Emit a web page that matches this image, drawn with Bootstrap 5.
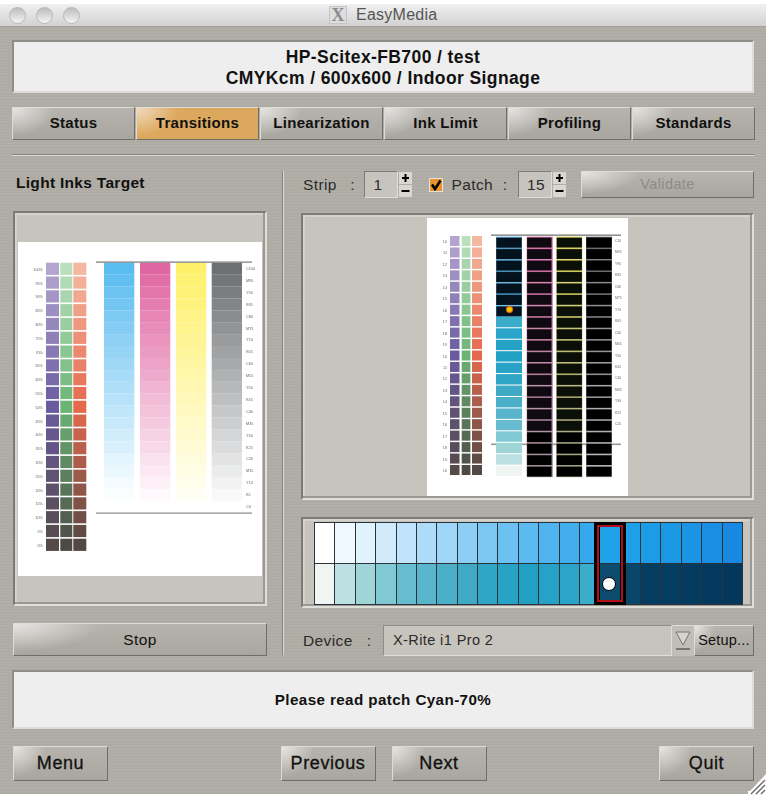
<!DOCTYPE html>
<html lang="en">
<head>
    <meta charset="UTF-8">
    <title>EasyMedia</title>
    <link href="https://cdn.jsdelivr.net/npm/bootstrap@5.3.2/dist/css/bootstrap.min.css" rel="stylesheet">
    <style>
        html, body { margin: 0; background: #fff; }
        body { font-family: "Liberation Sans", Arial, sans-serif; color: #111; }
        .app-window { width: 766px; height: 796px; padding: 4px 0 2px; position: relative; overflow: hidden; }
        .title-bar { height: 23px; background: linear-gradient(#f0f0f0, #d2d2d2); border-bottom: 1px solid #a5a39d; padding-left: 9px; }
        .light { width: 17px; height: 17px; border-radius: 50%; border: 1px solid #b8b8b8; background: linear-gradient(#bdbdbd, #f4f4f4); margin-right: 10px; }
        .title-wrap { position: absolute; left: 329px; top: 6px; }
        .x-logo { width: 18px; height: 18px; background: #dedede; border: 1px solid #c4c4c4; font: 700 18px/17px "Liberation Serif", serif; color: #8c8c8c; text-align: center; }
        .title-text { margin-left: 9px; font-size: 16px; letter-spacing: .25px; color: #555; line-height: 18px; }
        .metal { height: 767px; padding: 13px 12px 0; background: repeating-linear-gradient(0deg, #b0ada6 0 1px, #adaaa3 1px 2px, #b2afa8 2px 3px); }
        .info-box { background: #eeeeee; border: 2px solid #8f8d88; border-right-color: #dedcd6; border-bottom-color: #dedcd6; font-weight: 700; text-align: center; letter-spacing: .4px; }
        .head-box { height: 53px; width: 742px; font-size: 17.5px; line-height: 21px; padding-top: 5px; }
        .tab-row { margin-top: 14px; gap: 1px; width: 743px; }
        .mac-btn { border-radius: 0; padding: 0; color: #111; font-size: 16px; font-family: inherit; letter-spacing: .4px;
            border: 1px solid #6f6d68; border-top-color: #dddbd5; border-left-color: #dddbd5;
            background: radial-gradient(ellipse 34% 90% at 0 0, rgba(255,255,255,.65), rgba(255,255,255,0)), linear-gradient(#b7b4ad, #a9a69f); }
        .mac-btn:disabled { color: #8d8b86; opacity: 1; border-color: #dddbd5 #6f6d68 #6f6d68 #dddbd5; }
        .tab-btn { flex: 1 1 0; height: 33px; font-weight: 700; font-size: 15px; letter-spacing: .3px; }
        .tab-on { background: radial-gradient(ellipse 34% 90% at 0 0, rgba(255,255,255,.6), rgba(255,255,255,0)), #dca85e; }
        .rule { height: 2px; width: 742px; margin: 14px 0 15px; background: #85837e; border-bottom: 1px solid #dddbd5; }
        .side-left { width: 254px; margin-left: 1px; }
        .side-title { height: 40px; margin-left: 3px; padding-top: 3px; font-weight: 700; font-size: 15.5px; line-height: 18px; letter-spacing: .3px; }
        .divider { width: 2px; height: 484px; margin: 0 17px 0 15px; background: #85837e; border-right: 1px solid #dddbd5; }
        .side-right { width: 453px; }
        .sunken { border: 2px solid #7d7b76; border-right-color: #e0ded8; border-bottom-color: #e0ded8; padding: 3px; background: #c6c4bd; box-shadow: inset -2px -2px 0 #9a9892, inset 2px 2px 0 #d4d2cc; }
        .target-frame { height: 395px; }
        .target-frame svg { display: block; margin-top: 26px; filter: blur(.35px); }
        .stop-btn { height: 33px; margin-top: 17px; width: 254px; font-size: 15.5px; }
        .ctrl-row { height: 27px; margin-bottom: 15px; font-size: 15.5px; letter-spacing: .4px; color: #2b2b2b; }
        .strip-label { width: 47px; margin-left: 2px; }
        .patch-label { width: 45px; margin-left: 8px; }
        .ctrl-colon { width: 8px; text-align: center; }
        .colon-strip { margin-right: 8px; }
        .colon-patch { margin-left: 6px; margin-right: 9px; }
        .num-box { width: 34px; height: 27px; background: #c6c4bd; border: 1px solid #e0ded8; border-top-color: #7d7b76; border-left-color: #7d7b76; padding-left: 8px; line-height: 25px; }
        .spin { width: 13px; margin-left: 1px; }
        .spin svg { display: block; margin-bottom: 1px; }
        .check-box { width: 14px; height: 14px; margin-left: 17px; background: #e8932e; border: 1px solid #e6e4de; display: block; }
        .check-box svg { display: block; }
        .validate-btn { width: 173px; height: 27px; margin-left: 15px; font-size: 14.5px; flex-shrink: 0; }
        .page-frame { height: 287px; width: 453px; padding-top: 3px; }
        .page-frame svg { display: block; margin: 0 auto; filter: blur(.3px); }
        .strip-frame { height: 91px; width: 453px; margin-top: 17px; padding: 3px 9px 2px 11px; }
        .strip-wrap { position: relative; width: 429px; }
        .patch-grid { display: grid; grid-template-columns: repeat(21, 1fr); grid-auto-rows: 40px; background: #2a3338; gap: 1px; padding: 1px; }
        .strip-mark { position: absolute; left: 280px; top: 0; width: 32px; height: 83px; border: solid #000; border-width: 3px 6px; pointer-events: none; }
        .strip-mark::before { content: ""; position: absolute; left: -3px; top: 0; right: -3px; bottom: 0; border: 2px solid #b0101c; }
        .strip-dot { position: absolute; left: 2px; top: 52px; width: 14px; height: 14px; border-radius: 50%; background: #fff; border: 1px solid #000; }
        .device-row { margin-top: 17px; height: 31px; font-size: 15.5px; letter-spacing: .4px; color: #2b2b2b; }
        .device-label { width: 63px; margin-left: 2px; }
        .combo-field { width: 289px; height: 31px; margin-left: 10px; padding-left: 9px; line-height: 29px; font-size: 14.5px; background: #c6c4bd; border: 1px solid #e0ded8; border-top-color: #8f8d88; border-left-color: #8f8d88; flex-shrink: 0; }
        .combo-arrow { width: 22px; height: 31px; background: #c0beb7; border-top: 1px solid #e0ded8; flex-shrink: 0; }
        .setup-btn { width: 60px; height: 31px; font-size: 14.5px; letter-spacing: .2px; flex-shrink: 0; }
        .msg-box { height: 59px; width: 742px; margin-top: 14px; font-size: 15.2px; line-height: 55px; }
        .foot-row { margin: 17px 0 0 1px; width: 741px; }
        .foot-btn { width: 95px; height: 35px; font-size: 18px; letter-spacing: .6px; -webkit-text-stroke: .3px #111; }
        .foot-gap { width: 16px; }
        .resize-grip { position: absolute; right: 0; bottom: 0; width: 18px; height: 22px; }
        .tiny-tag { filter: blur(.45px); }
    </style>
</head>
<body>
<div class="app-window">
    <div class="title-bar d-flex align-items-center">
        <span class="light"></span><span class="light"></span><span class="light"></span>
    </div>
    <div class="title-wrap d-flex">
        <div class="x-logo">X</div>
        <div class="title-text">EasyMedia</div>
    </div>

    <div class="metal">
        <div class="info-box head-box">HP-Scitex-FB700 / test<br>CMYKcm / 600x600 / Indoor Signage</div>

        <div class="d-flex tab-row">
            <button class="btn mac-btn tab-btn">Status</button>
            <button class="btn mac-btn tab-btn tab-on">Transitions</button>
            <button class="btn mac-btn tab-btn">Linearization</button>
            <button class="btn mac-btn tab-btn">Ink Limit</button>
            <button class="btn mac-btn tab-btn">Profiling</button>
            <button class="btn mac-btn tab-btn">Standards</button>
        </div>
        <div class="rule"></div>

        <div class="d-flex">
            <div class="side-left">
                <div class="side-title">Light Inks Target</div>
                <div class="sunken target-frame">
                    <svg id="light-chart" width="244" height="334" viewBox="18 242 244 334"></svg>
                </div>
                <button class="btn mac-btn stop-btn d-block">Stop</button>
            </div>
            <div class="divider"></div>
            <div class="side-right">
                <div class="d-flex align-items-center ctrl-row">
                    <span class="strip-label">Strip</span>
                    <span class="ctrl-colon colon-strip">:</span>
                    <div class="num-box flex-shrink-0">1</div>
                    <div class="spin flex-shrink-0">
                        <svg width="13" height="12" viewBox="0 0 13 12"><rect width="13" height="12" fill="#d9d7d1"/><path d="M6.5 2v8M3 6h7" stroke="#000" stroke-width="2"/></svg>
                        <svg width="13" height="12" viewBox="0 0 13 12"><rect width="13" height="12" fill="#d9d7d1"/><path d="M2.5 6h8" stroke="#000" stroke-width="2"/></svg>
                    </div>
                    <span class="check-box flex-shrink-0">
                        <svg width="12" height="12" viewBox="0 0 12 12"><path d="M2 5.5 5 10 10.5 1.5" fill="none" stroke="#000" stroke-width="2.6"/></svg>
                    </span>
                    <span class="patch-label">Patch</span>
                    <span class="ctrl-colon colon-patch">:</span>
                    <div class="num-box flex-shrink-0">15</div>
                    <div class="spin flex-shrink-0">
                        <svg width="13" height="12" viewBox="0 0 13 12"><rect width="13" height="12" fill="#d9d7d1"/><path d="M6.5 2v8M3 6h7" stroke="#000" stroke-width="2"/></svg>
                        <svg width="13" height="12" viewBox="0 0 13 12"><rect width="13" height="12" fill="#d9d7d1"/><path d="M2.5 6h8" stroke="#000" stroke-width="2"/></svg>
                    </div>
                    <button class="btn mac-btn validate-btn" disabled>Validate</button>
                </div>
                <div class="sunken page-frame">
                    <svg id="page-chart" width="201" height="278" viewBox="427 218 201 278"></svg>
                </div>
                <div class="sunken strip-frame">
                    <div class="strip-wrap">
                        <div class="patch-grid" id="patch-grid"></div>
                        <div class="strip-mark"><span class="strip-dot"></span></div>
                    </div>
                </div>
                <div class="d-flex align-items-center device-row">
                    <span class="device-label">Device</span>
                    <span class="ctrl-colon">:</span>
                    <div class="combo-field">X-Rite i1 Pro 2</div>
                    <div class="combo-arrow d-flex align-items-center justify-content-center">
                        <svg width="18" height="22" viewBox="0 0 18 22"><path d="M2 2h14L9 15z" fill="#d6d4ce" stroke="#77756f"/><path d="M2 19h14" stroke="#77756f" stroke-width="2"/></svg>
                    </div>
                    <button class="btn mac-btn setup-btn">Setup...</button>
                </div>
            </div>
        </div>

        <div class="info-box msg-box">Please read patch Cyan-70%</div>

        <div class="d-flex foot-row">
            <button class="btn mac-btn foot-btn">Menu</button>
            <div class="flex-grow-1"></div>
            <button class="btn mac-btn foot-btn">Previous</button>
            <div class="foot-gap"></div>
            <button class="btn mac-btn foot-btn">Next</button>
            <div class="flex-grow-1"></div>
            <button class="btn mac-btn foot-btn">Quit</button>
        </div>
    </div>

    <svg class="resize-grip" viewBox="0 0 18 22"><path d="M18 0v22H0V17h2z" fill="#fff"/><path d="M3 20 17 6M8 20 17 11M13 20l4-4" stroke="#666" stroke-width="1.3"/></svg>
</div>

<script>
    function hex(c) { return [1, 3, 5].map(i => parseInt(c.substr(i, 2), 16)); }
    function mix(a, b, t) {
        let x = hex(a), y = hex(b);
        return "rgb(" + x.map((v, i) => Math.round(v + (y[i] - v) * t)).join(",") + ")";
    }
    function stops3(c, i) {
        return i <= 10 ? mix(c[0], c[1], i / 10) : mix(c[1], c[2], (i - 10) / 10);
    }
    function rect(x, y, w, h, fill) {
        return '<rect x="' + x + '" y="' + y + '" width="' + w + '" height="' + h + '" fill="' + fill + '"/>';
    }
    function label(x, y, txt, size, anchor) {
        return '<text class="tiny-tag" x="' + x + '" y="' + y + '" font-size="' + size + '" fill="#666" text-anchor="' + anchor + '" font-family="Liberation Sans">' + txt + '</text>';
    }

    const inks = [
        ["#b3a5d0", "#6a5ba0", "#544a48"],
        ["#b9dfbc", "#6bb476", "#4d4a46"],
        ["#f4b7a0", "#e6694e", "#544844"]
    ];
    const bands = [
        ["#5bbcf0", "#fbfeff"],
        ["#e066a2", "#fff8fc"],
        ["#fff06a", "#fffef2"],
        ["#6c7073", "#f9f9f9"]
    ];
    const sideTags = ["C100", "M95", "Y90", "K85", "C80", "M75", "Y70", "K65", "C60", "M55", "Y50", "K45", "C40", "M35", "Y30", "K25", "C20", "M15", "Y10", "K5", "C0"];

    // left target, light inks
    let s = rect(18, 242, 244, 334, "#fff");
    const colsL = [[46, 13], [60.3, 12], [73.3, 13]];
    for (let i = 0; i < 21; i++) {
        let y = 262.7 + i * 13.8;
        colsL.forEach((c, k) => { s += rect(c[0], y, c[1], 12.2, stops3(inks[k], i)); });
        s += label(43, y + 8, (100 - i * 5) + "%", 3.8, "end");
    }
    [104, 140, 176, 211.7].forEach((x, k) => {
        for (let i = 0; i < 20; i++) {
            s += rect(x, 262.7 + i * 11.9, 30.3, 12, mix(bands[k][0], bands[k][1], i / 19));
        }
    });
    for (let i = 0; i < 21; i++) s += label(246, 270 + i * 11.9, sideTags[i], 3.8, "start");
    s += rect(96, 261.5, 156, 1.2, "#777") + rect(96, 512.5, 156, 1.2, "#888");
    document.getElementById("light-chart").innerHTML = s;

    // strip colours, top row and bottom row
    const topRow = ["#ffffff", "#eff8ff", "#e0f2fb", "#d0eafa", "#c0e4fb", "#aedcf8", "#9fd5f6", "#8dcff4", "#7cc8f3", "#6cc1f2", "#5bbaf0", "#4fb4ef", "#43aeee", "#36a8ed", "#1ea2ea", "#1ea0e8", "#1c9ce6", "#1b98e4", "#1a94e3", "#1a8ee2", "#1888e0"];
    const lowRow = ["#f0f5f2", "#bde0e2", "#a0d5d8", "#80c8d4", "#68bccf", "#58b5cc", "#4bafc8", "#3fa9c6", "#30a5c6", "#28a3c6", "#22a0c4", "#26a2c6", "#2aa4c8", "#3caccb", "#0c4a6e", "#0a4669", "#053d62", "#053c61", "#053b60", "#04395e", "#04375c"];
    let g = "";
    topRow.concat(lowRow).forEach(c => { g += '<div style="background:' + c + '"></div>'; });
    document.getElementById("patch-grid").innerHTML = g;

    // right target, the page being read
    let p = rect(427, 218, 201, 278, "#fff");
    p += rect(491, 234.5, 130, 1.3, "#777") + rect(491, 443.5, 130, 1.6, "#999");
    const colsR = [[450, 9.5], [461.7, 8.7], [472, 10]];
    for (let i = 0; i < 21; i++) {
        let y = 236 + i * 11.45;
        colsR.forEach((c, k) => { p += rect(c[0], y, c[1], 10, stops3(inks[k], i)); });
        p += label(447, y + 7, "1" + (i % 10), 3.8, "end");
        if (i < 17) p += label(615, y + 6, sideTags[i].slice(0, 3), 3.4, "start");
    }
    const lines = [
        null,
        ["#d0609a", "#8a7a84", "#0f0a12"],
        ["#d8d050", "#8a8a70", "#0a0f08"],
        ["#555555", "#aaaaaa", "#000000"]
    ];
    [496, 526.7, 556.3, 586].forEach((x, k) => {
        for (let i = 0; i < 21; i++) {
            let y = 236.7 + i * 11.45;
            if (k == 0) {
                if (i < 7) {
                    p += rect(x, y, 26, 11.45, i % 2 ? "#3f88b0" : "#5cb4e4") + rect(x + .3, y + 1, 25.4, 10, "#04121e");
                } else {
                    p += rect(x, y, 26, 10.4, lowRow[20 - i]);
                }
            } else {
                let line = mix(lines[k][0], lines[k][1], i / 20);
                let dark = i > 16 ? "#000" : lines[k][2];
                p += rect(x, y, 26, 11.45, line) + rect(x + .4, y + 1, k == 1 ? 24.4 : 25.2, 9.8, dark);
            }
        }
    });
    p += '<circle cx="509.5" cy="309.5" r="3.2" fill="#f7c600" stroke="#e0590c"/>';
    document.getElementById("page-chart").innerHTML = p;
</script>
<script src="https://cdn.jsdelivr.net/npm/bootstrap@5.3.2/dist/js/bootstrap.bundle.min.js"></script>
</body>
</html>
